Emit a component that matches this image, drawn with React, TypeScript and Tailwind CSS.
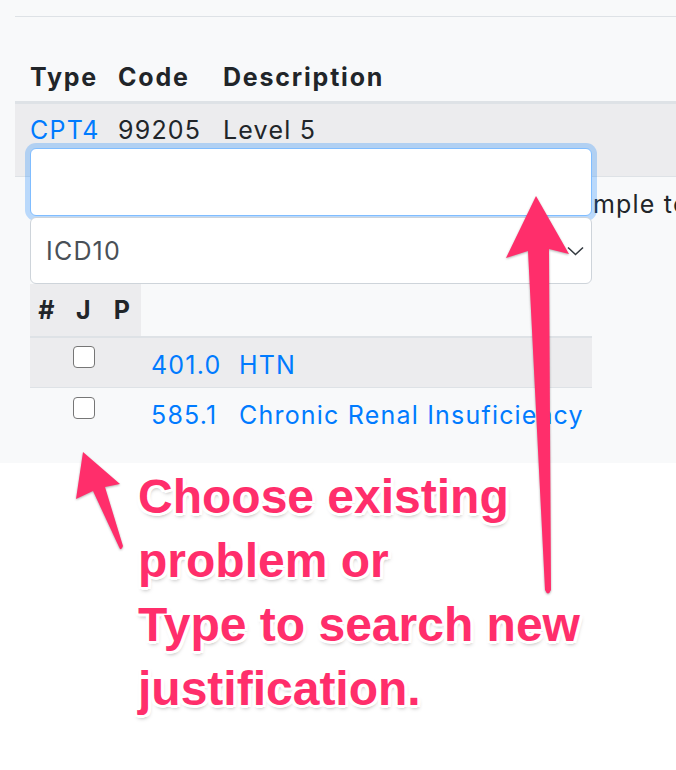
import React from "react";

const ui = "font-['Inter','Noto_Sans',sans-serif]";

const problems = [
  { code: "401.0", title: "HTN" },
  { code: "585.1", title: "Chronic Renal Insuficiency" },
];

const outline =
  "[text-shadow:3px_0_0_#fff,-3px_0_0_#fff,0_3px_0_#fff,0_-3px_0_#fff,2px_2px_0_#fff,-2px_-2px_0_#fff,2px_-2px_0_#fff,-2px_2px_0_#fff,3px_2px_0_#fff,-3px_2px_0_#fff,3px_-2px_0_#fff,-3px_-2px_0_#fff,1px_3px_4px_rgba(0,0,0,0.35)]";

const Arrows: React.FC = () => (
  <svg
    className="absolute left-0 top-0 pointer-events-none [filter:drop-shadow(0_1px_1px_rgba(0,0,0,0.3))]"
    width="676"
    height="770"
    viewBox="0 0 676 770"
  >
    {/* long arrow pointing to the search box */}
    <path
      d="M536 196 L569 254 L549 249 L551 590 Q548 597 545 590 L528 251 L506 258 Z"
      fill="#ff2e6b"
    />
    {/* short arrow pointing to the checkbox */}
    <path
      d="M83 452 L120 484 L105 487 L123 546 Q121 552 119 547 L93 491 L76 499 Z"
      fill="#ff2e6b"
    />
  </svg>
);

const App: React.FC = () => {
  return (
    <div className={`relative w-[676px] h-[770px] overflow-hidden bg-white ${ui}`}>
      {/* Page area */}
      <div className="relative h-[463px] bg-[#f8f9fa] pl-[15px] text-[25px] leading-[36px] tracking-[1.2px] text-[#212529]">
        <div className="pt-[16px]">
          <hr className="border-0 border-t border-[#dee2e6]" />
        </div>

        <table className="mt-[34px] w-full table-fixed border-collapse text-left">
          <thead>
            <tr className="border-b-[3px] border-[#dee2e6] tracking-[1.8px]">
              <th className="w-[93px] pl-[15px] pr-[10px] pt-[8px] pb-[6px] font-bold">Type</th>
              <th className="w-[105px] px-[10px] pt-[8px] pb-[6px] font-bold">Code</th>
              <th className="px-[10px] pt-[8px] pb-[6px] font-bold">Description</th>
            </tr>
          </thead>
          <tbody>
            <tr className="h-[74px] border-b border-[#dee2e6] bg-[#ececee]">
              <td className="pl-[15px] pr-[10px] pt-[8px] align-top text-[#007bff]">CPT4</td>
              <td className="px-[10px] pt-[8px] align-top whitespace-nowrap">99205</td>
              <td className="px-[10px] pt-[8px] align-top">Level 5</td>
            </tr>
            <tr className="h-[52px]">
              <td colSpan={3} className="pl-[15px] pt-[9px] align-top">
                <div className="flex whitespace-nowrap">
                  <span className="w-[563px] shrink-0 overflow-hidden">
                    Enter a code or search the list for exa
                  </span>
                  <span>mple to add</span>
                </div>
              </td>
            </tr>
          </tbody>
        </table>

        {/* Justification dropdown */}
        <div className="absolute left-[30px] top-[148px] w-[562px]">
          <input
            type="text"
            className="block h-[68px] w-full rounded-[6px] border border-[#80bdff] bg-white px-[16px] outline-none shadow-[0_0_0_5px_rgba(0,123,255,0.25)]"
          />
          <div className="relative mt-[1px]">
            <select className="block h-[67px] w-full appearance-none rounded-[6px] border border-[#ced4da] bg-white pl-[15px] text-[#495057] outline-none">
              <option>ICD10</option>
            </select>
            <svg
              className="absolute right-[8px] top-[29px] pointer-events-none"
              width="17"
              height="10"
              viewBox="0 0 17 10"
            >
              <path d="M1 1.5 L8.5 8.5 L16 1.5" fill="none" stroke="#343a40" strokeWidth="1.6" />
            </svg>
          </div>

          <table className="w-full border-collapse text-left">
            <thead>
              <tr className="border-b-[2px] border-[#dee2e6]">
                <th className="h-[53px] w-[34px] bg-[#ececee] text-center font-bold">#</th>
                <th className="h-[53px] w-[40px] bg-[#ececee] text-center font-bold">J</th>
                <th className="h-[53px] w-[37px] bg-[#ececee] text-center font-bold">P</th>
                <th className="w-[89px]"></th>
                <th></th>
              </tr>
            </thead>
            <tbody>
              {problems.map((p, i) => (
                <tr
                  key={p.code}
                  className={i === 0 ? "h-[50px] border-b border-[#dee2e6] bg-[#ececee]" : "h-[50px]"}
                >
                  <td></td>
                  <td className={i === 0 ? "pt-[8px] align-top text-center" : "pt-[9px] align-top text-center"}>
                    <input
                      type="checkbox"
                      className="block mx-auto h-[22px] w-[22px] appearance-none rounded-[4px] border-[1.5px] border-[#767676] bg-white"
                    />
                  </td>
                  <td></td>
                  <td className="pl-[10px] pt-[9px] align-top text-[#007bff] whitespace-nowrap">{p.code}</td>
                  <td className="pl-[9px] pt-[9px] align-top text-[#007bff] whitespace-nowrap">{p.title}</td>
                </tr>
              ))}
            </tbody>
          </table>
        </div>
      </div>

      {/* Annotation */}
      <div
        className={`pl-[138px] pt-[2px] font-['Liberation_Sans',Arial,sans-serif] text-[48px] font-bold leading-[64px] text-[#ff2e6b] ${outline}`}
      >
        <div>Choose existing</div>
        <div>problem or</div>
        <div>Type to search new</div>
        <div>justification.</div>
      </div>

      <Arrows />
    </div>
  );
};

export default App;
